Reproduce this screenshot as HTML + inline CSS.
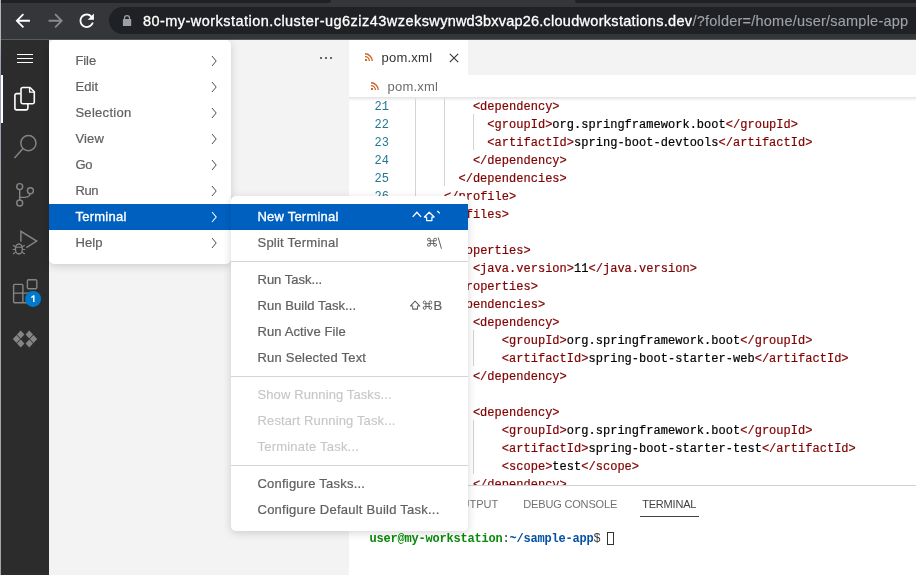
<!DOCTYPE html>
<html>
<head>
<meta charset="utf-8">
<title>pom.xml - sample-app</title>
<style>
*{box-sizing:border-box;margin:0;padding:0}
html,body{width:916px;height:575px;overflow:hidden;background:#fff}
body{position:relative;will-change:transform;font-family:"Liberation Sans",sans-serif;font-size:13px;color:#616161}
.abs{position:absolute}
/* ---------- chrome toolbar ---------- */
#chrome{left:0;top:0;width:916px;height:40px;background:#35363a}
#tabstrip-l{left:0;top:0;width:331px;height:2.6px;background:#202124;border-bottom-right-radius:6px}
#tabstrip-r{left:575px;top:0;width:341px;height:2.6px;background:#202124;border-bottom-left-radius:6px}
#chromeline{left:0;top:39px;width:916px;height:1px;background:#5a5b5e}
#pill{left:109px;top:7px;width:830px;height:27px;border-radius:14px;background:#202124}
#url{left:143px;top:12px;height:18px;line-height:18px;font-size:14.5px;white-space:pre;color:#fff;letter-spacing:.367px;-webkit-text-stroke:.3px #fff}
#url .dim{color:#9ea3a9;letter-spacing:.225px;-webkit-text-stroke:.12px #9ea3a9}
/* ---------- left strip ---------- */
#lstrip{left:0;top:0;width:1px;height:575px;background:linear-gradient(to bottom,#b3b3b3 0,#b3b3b3 40px,#99a0b2 60px,#99a0b2 130px,#a6a6a6 250px,#a6a6a6 100%)}
#lstrip2{left:0;top:0;width:1px;height:40px;background:#b3b3b3}
/* ---------- activity bar ---------- */
#act{left:1px;top:40px;width:48px;height:535px;background:#2c2c2c}
#ind{left:1px;top:75px;width:2px;height:48px;background:#fff}
/* ---------- sidebar ---------- */
#side{left:49px;top:40px;width:300px;height:535px;background:#f3f3f3}
/* ---------- editor ---------- */
#tabs{left:349px;top:40px;width:567px;height:35px;background:#f3f3f3}
#tab{left:349px;top:40px;width:119px;height:35px;background:#fff}
#crumbs{left:349px;top:75px;width:567px;height:22px;background:#fff}
#edshadow{left:349px;top:97px;width:567px;height:4px;background:linear-gradient(#e2e2e2,rgba(255,255,255,0))}
.code{-webkit-text-stroke:.2px;font-family:"Liberation Mono",monospace;font-size:12px;letter-spacing:.024px;white-space:pre;line-height:18px;height:18px;color:#000}
.code i{font-style:normal;color:#800000}
.ln{font-family:"Liberation Mono",monospace;font-size:12px;letter-spacing:.024px;line-height:18px;height:18px;color:#237893;left:349px;width:40px;text-align:right}
.g{width:1px;background:#d3d3d3}
/* ---------- panel ---------- */
#panelline{left:349px;top:485px;width:567px;height:1px;background:#d0d0d0}
#panel{left:349px;top:486px;width:567px;height:89px;background:#fff}
.ptab{top:497px;height:14px;line-height:14px;font-size:11px;color:#717171;white-space:pre}
/* ---------- menus ---------- */
.menu{background:#fff;border-radius:5px;box-shadow:0 2px 8px rgba(0,0,0,.16)}
.mi{position:absolute;left:0;right:0;height:26px;line-height:26px;white-space:pre}
.mi span{position:absolute;top:0;-webkit-text-stroke:.22px}
.mi.sel{background:#0060c0;color:#fff}
.mi.sel span{-webkit-text-stroke:.35px}
.sep{position:absolute;left:0;right:0;height:1px;background:#d4d4d4}
.dis{color:#c6c6c6}
.mi.dis span{-webkit-text-stroke:.1px}
.kb{right:26px;text-align:right}
</style>
</head>
<body>
<!-- browser toolbar -->
<div id="chrome" class="abs"></div>
<div id="tabstrip-l" class="abs"></div>
<div id="tabstrip-r" class="abs"></div>
<div id="pill" class="abs"></div>
<div id="chromeline" class="abs"></div>
<div id="url" class="abs"><span style="letter-spacing:.456px">80-my-workstation.</span><span style="letter-spacing:.467px">cluster-ug6ziz43wzeksw</span><span style="letter-spacing:.175px">ynwd3bxvap26.</span><span style="letter-spacing:.305px">cloudworkstations.dev</span><span class="dim">/?folder=/home/user/sample-app</span></div>

<!-- activity bar -->
<div id="act" class="abs"></div>
<div id="ind" class="abs"></div>


<!-- toolbar icons -->
<svg class="abs" style="left:12.25px;top:10.25px" width="21.5" height="21.5" viewBox="0 0 24 24"><path fill="#fff" d="M20 11H7.83l5.59-5.59L12 4l-8 8 8 8 1.41-1.41L7.83 13H20v-2z"/></svg>
<svg class="abs" style="left:44.7px;top:10.25px" width="21.5" height="21.5" viewBox="0 0 24 24"><path fill="#8a8b8e" d="M4 11h12.17l-5.59-5.59L12 4l8 8-8 8-1.41-1.41L16.17 13H4v-2z"/></svg>
<svg class="abs" style="left:76.3px;top:10.1px" width="21.5" height="21.5" viewBox="0 0 24 24"><path fill="#fff" d="M17.65 6.35C16.2 4.9 14.21 4 12 4c-4.42 0-7.99 3.58-7.99 8s3.57 8 7.99 8c3.73 0 6.84-2.55 7.73-6h-2.08c-.82 2.33-3.04 4-5.65 4-3.31 0-6-2.69-6-6s2.69-6 6-6c1.66 0 3.14.69 4.22 1.78L13 11h7V4l-2.35 2.35z"/></svg>
<svg class="abs" style="left:122px;top:14px" width="10" height="13" viewBox="0 0 10 13"><rect x=".9" y="5.100" width="8.300" height="7" rx=".7" fill="#9aa0a6"/><path fill="none" stroke="#9aa0a6" stroke-width="1.250" d="M2.500 5.600V4a2.500 2.500 0 0 1 5 0v1.600"/></svg>

<!-- activity bar icons -->
<svg class="abs" style="left:0;top:40px" width="50" height="535" viewBox="0 40 50 535" fill="none" stroke-linecap="butt">
  <!-- hamburger -->
  <path stroke="#fff" stroke-width="1" d="M17 54.500h16M17 58.500h16M17 62.500h16"/>
  <!-- files -->
  <g stroke="#fff" stroke-width="1.6" stroke-linejoin="round">
    <path d="M22.800 87.500h7.200l4.300 4.300v10.200a1.800 1.800 0 0 1-1.800 1.800h-9.700a1.800 1.800 0 0 1-1.800-1.800v-12.700a1.800 1.800 0 0 1 1.800-1.800z"/>
    <path d="M29.600 87.700v4.500h4.500" stroke-width="1.300"/>
    <path d="M20.500 93.600h-3.800a1.800 1.800 0 0 0-1.800 1.800v12.700a1.800 1.800 0 0 0 1.800 1.800h9.400a1.800 1.800 0 0 0 1.800-1.800v-4"/>
  </g>
  <!-- search -->
  <g stroke="#858585" stroke-width="1.500">
    <circle cx="28.400" cy="143.100" r="7.600"/>
    <path d="M23 148.600l-8.500 9.300"/>
  </g>
  <!-- scm -->
  <g stroke="#858585" stroke-width="1.400">
    <circle cx="19.700" cy="186.600" r="3"/>
    <circle cx="19.700" cy="203" r="3"/>
    <circle cx="30.400" cy="190.800" r="3"/>
    <path d="M19.700 189.600v10.400M30.200 193.800c-.3 3.200-3.500 3.600-10.500 3.600"/>
  </g>
  <!-- debug -->
  <g stroke="#858585" stroke-width="1.400" stroke-linejoin="miter">
    <path d="M20.900 241.700v-10.400l15.800 9.800-10.400 6.600"/>
    <ellipse cx="18.900" cy="249" rx="3.500" ry="5"/>
    <path d="M15.700 247.200h6.400" stroke-width="1.100"/>
    <path d="M13 245.200l2.600 1.500M12.700 249.500h2.800M13 254l2.600-1.800M24.800 245.200l-2.600 1.500M25.100 249.500h-2.800M24.800 254l-2.600-1.800" stroke-width="1.200"/>
  </g>
  <!-- extensions -->
  <g stroke="#858585" stroke-width="1.400" stroke-linejoin="round">
    <rect x="27.400" y="279.800" width="9.400" height="8.900" rx="1.200"/>
    <path d="M14.600 284.400h7.300a1 1 0 0 1 1 1v7.700h7.600v8.600a1 1 0 0 1-1 1h-14.900a1 1 0 0 1-1-1v-16.300a1 1 0 0 1 1-1zM13.600 293.100h9.300v9.600"/>
  </g>
  <circle cx="33.100" cy="298.900" r="8" fill="#007acc" stroke="none"/>
  <path fill="#fff" stroke="none" d="M31 297.100l2.300-1.900h1.200v6.800h-1.400v-5l-1.500 1.200z"/>
  <!-- cloud code -->
  <g fill="#858585" stroke="none">
    <path d="M20.700 330.600l3.700 3.900-3.700 3.900-3.700-3.900zM16.500 335.100l3.700 3.900-3.700 3.900-3.700-3.900zM20.700 339.600l3.700 3.900-3.700 3.900-3.700-3.900z"/>
    <path d="M29.300 330.600l3.700 3.900-3.700 3.900-3.700-3.900zM33.500 335.100l3.700 3.900-3.700 3.900-3.700-3.900zM29.300 339.600l3.700 3.900-3.700 3.900-3.700-3.900z"/>
  </g>
</svg>

<!-- sidebar -->
<div id="side" class="abs"></div>

<!-- editor -->
<div id="tabs" class="abs"></div>
<div id="tab" class="abs"></div>
<div id="crumbs" class="abs"></div>

<!-- panel -->
<div id="panelline" class="abs"></div>
<div id="panel" class="abs"></div>

<!-- editor content -->
<div id="ed" class="abs" style="left:349px;top:97px;width:567px;height:388px;overflow:hidden;background:#fff">
<div class="abs ln" style="left:0px;top:1px">21</div>
<div class="abs code" style="left:123.89px;top:1px"><i>&lt;dependency&gt;</i></div>
<div class="abs ln" style="left:0px;top:19px">22</div>
<div class="abs code" style="left:138.34px;top:19px"><i>&lt;groupId&gt;</i>org.springframework.boot<i>&lt;/groupId&gt;</i></div>
<div class="abs ln" style="left:0px;top:37px">23</div>
<div class="abs code" style="left:138.34px;top:37px"><i>&lt;artifactId&gt;</i>spring-boot-devtools<i>&lt;/artifactId&gt;</i></div>
<div class="abs ln" style="left:0px;top:55px">24</div>
<div class="abs code" style="left:123.89px;top:55px"><i>&lt;/dependency&gt;</i></div>
<div class="abs ln" style="left:0px;top:73px">25</div>
<div class="abs code" style="left:109.44px;top:73px"><i>&lt;/dependencies&gt;</i></div>
<div class="abs ln" style="left:0px;top:91px">26</div>
<div class="abs code" style="left:95px;top:91px"><i>&lt;/profile&gt;</i></div>
<div class="abs ln" style="left:0px;top:109px">27</div>
<div class="abs code" style="left:80.55px;top:109px"><i>&lt;/profiles&gt;</i></div>
<div class="abs ln" style="left:0px;top:127px">28</div>
<div class="abs ln" style="left:0px;top:145px">29</div>
<div class="abs code" style="left:95px;top:145px"><i>&lt;properties&gt;</i></div>
<div class="abs ln" style="left:0px;top:163px">30</div>
<div class="abs code" style="left:123.89px;top:163px"><i>&lt;java.version&gt;</i>11<i>&lt;/java.version&gt;</i></div>
<div class="abs ln" style="left:0px;top:181px">31</div>
<div class="abs code" style="left:95px;top:181px"><i>&lt;/properties&gt;</i></div>
<div class="abs ln" style="left:0px;top:199px">32</div>
<div class="abs code" style="left:95px;top:199px"><i>&lt;dependencies&gt;</i></div>
<div class="abs ln" style="left:0px;top:217px">33</div>
<div class="abs code" style="left:123.89px;top:217px"><i>&lt;dependency&gt;</i></div>
<div class="abs ln" style="left:0px;top:235px">34</div>
<div class="abs code" style="left:152.79px;top:235px"><i>&lt;groupId&gt;</i>org.springframework.boot<i>&lt;/groupId&gt;</i></div>
<div class="abs ln" style="left:0px;top:253px">35</div>
<div class="abs code" style="left:152.79px;top:253px"><i>&lt;artifactId&gt;</i>spring-boot-starter-web<i>&lt;/artifactId&gt;</i></div>
<div class="abs ln" style="left:0px;top:271px">36</div>
<div class="abs code" style="left:123.89px;top:271px"><i>&lt;/dependency&gt;</i></div>
<div class="abs ln" style="left:0px;top:289px">37</div>
<div class="abs ln" style="left:0px;top:307px">38</div>
<div class="abs code" style="left:123.89px;top:307px"><i>&lt;dependency&gt;</i></div>
<div class="abs ln" style="left:0px;top:325px">39</div>
<div class="abs code" style="left:152.79px;top:325px"><i>&lt;groupId&gt;</i>org.springframework.boot<i>&lt;/groupId&gt;</i></div>
<div class="abs ln" style="left:0px;top:343px">40</div>
<div class="abs code" style="left:152.79px;top:343px"><i>&lt;artifactId&gt;</i>spring-boot-starter-test<i>&lt;/artifactId&gt;</i></div>
<div class="abs ln" style="left:0px;top:361px">41</div>
<div class="abs code" style="left:152.79px;top:361px"><i>&lt;scope&gt;</i>test<i>&lt;/scope&gt;</i></div>
<div class="abs ln" style="left:0px;top:379px">42</div>
<div class="abs code" style="left:123.89px;top:379px"><i>&lt;/dependency&gt;</i></div>
<div class="abs g" style="left:66.1px;top:-1px;height:396px"></div>
<div class="abs g" style="left:95px;top:-1px;height:90px"></div>
<div class="abs g" style="left:123.9px;top:17px;height:36px"></div>
<div class="abs g" style="left:95px;top:161px;height:18px"></div>
<div class="abs g" style="left:95px;top:215px;height:180px"></div>
<div class="abs g" style="left:123.9px;top:233px;height:36px"></div>
<div class="abs g" style="left:123.9px;top:323px;height:54px"></div>
</div>
<div id="edshadow" class="abs"></div>
<svg class="abs" style="left:364.85px;top:53px" width="8" height="8" viewBox="0 0 8 8"><rect x="0" y="6" width="2" height="2" fill="#cc6628"/><path fill="none" stroke="#cc6628" stroke-width="1.400" d="M0 3.600a4.400 4.400 0 0 1 4.400 4.400M0 .8a7.200 7.200 0 0 1 7.200 7.200"/></svg>
<div class="abs" style="left:381.6px;top:49px;line-height:18px;color:#333;letter-spacing:.22px;white-space:pre">pom.xml</div>
<svg class="abs" style="left:449px;top:53px" width="10" height="10" viewBox="0 0 10 10"><path stroke="#333" stroke-width="1.100" fill="none" d="M.8 .8l8.400 8.400M9.200 .8L.8 9.200"/></svg>
<svg class="abs" style="left:370.8px;top:82px" width="8" height="8" viewBox="0 0 8 8"><rect x="0" y="6" width="2" height="2" fill="#cc6628"/><path fill="none" stroke="#cc6628" stroke-width="1.400" d="M0 3.600a4.400 4.400 0 0 1 4.400 4.400M0 .8a7.200 7.200 0 0 1 7.200 7.200"/></svg>
<div class="abs" style="left:387.5px;top:78px;line-height:18px;color:#6c6c6c;letter-spacing:.22px;white-space:pre">pom.xml</div>
<div class="abs" style="left:320px;top:57px;width:14px;height:3px"><i class="abs" style="left:0;top:0;width:2px;height:2px;background:#666"></i><i class="abs" style="left:5px;top:0;width:2px;height:2px;background:#666"></i><i class="abs" style="left:10px;top:0;width:2px;height:2px;background:#666"></i></div>
<div class="abs ptab" style="left:453px">OUTPUT</div>
<div class="abs ptab" style="left:523.3px;letter-spacing:-.17px">DEBUG CONSOLE</div>
<div class="abs ptab" style="left:642.2px;letter-spacing:-.2px;color:#424242">TERMINAL</div>
<div class="abs" style="left:640px;top:516px;width:59px;height:1px;background:#424242"></div>
<div class="abs" style="left:369.5px;top:530px;height:18px;line-height:18px;font-family:'Liberation Mono',monospace;font-size:12px;letter-spacing:-.2px;white-space:pre;color:#333"><b style="color:#0a8a0a">user@my-workstation</b>:<b style="color:#0451a5">~/sample-app</b>$ </div>
<div class="abs" style="left:607px;top:531.5px;width:7px;height:13px;border:1px solid #333"></div>

<!-- main menu -->
<div class="abs menu" style="left:49px;top:40px;width:182px;height:224px">
<div class="mi" style="top:8px"><span style="left:26.400px;letter-spacing:-0.062px">File</span><svg class="abs" style="left:161.7px;top:6.500px" width="7" height="12" viewBox="0 0 7 12"><path fill="none" stroke="#4d4d4d" stroke-width="1" d="M1 1l4.200 5L1 11"/></svg></div>
<div class="mi" style="top:34px"><span style="left:26.400px;letter-spacing:0.072px">Edit</span><svg class="abs" style="left:161.7px;top:6.500px" width="7" height="12" viewBox="0 0 7 12"><path fill="none" stroke="#4d4d4d" stroke-width="1" d="M1 1l4.200 5L1 11"/></svg></div>
<div class="mi" style="top:60px"><span style="left:26.400px;letter-spacing:0.302px">Selection</span><svg class="abs" style="left:161.7px;top:6.500px" width="7" height="12" viewBox="0 0 7 12"><path fill="none" stroke="#4d4d4d" stroke-width="1" d="M1 1l4.200 5L1 11"/></svg></div>
<div class="mi" style="top:86px"><span style="left:26.400px;letter-spacing:0.163px">View</span><svg class="abs" style="left:161.7px;top:6.500px" width="7" height="12" viewBox="0 0 7 12"><path fill="none" stroke="#4d4d4d" stroke-width="1" d="M1 1l4.200 5L1 11"/></svg></div>
<div class="mi" style="top:112px"><span style="left:26.400px;letter-spacing:-0.37px">Go</span><svg class="abs" style="left:161.7px;top:6.500px" width="7" height="12" viewBox="0 0 7 12"><path fill="none" stroke="#4d4d4d" stroke-width="1" d="M1 1l4.200 5L1 11"/></svg></div>
<div class="mi" style="top:138px"><span style="left:26.400px;letter-spacing:-0.32px">Run</span><svg class="abs" style="left:161.7px;top:6.500px" width="7" height="12" viewBox="0 0 7 12"><path fill="none" stroke="#4d4d4d" stroke-width="1" d="M1 1l4.200 5L1 11"/></svg></div>
<div class="mi sel" style="top:164px"><span style="left:26.400px;letter-spacing:0.272px">Terminal</span><svg class="abs" style="left:161.7px;top:6.500px" width="7" height="12" viewBox="0 0 7 12"><path fill="none" stroke="#fff" stroke-width="1.050" d="M1 1l4.200 5L1 11"/></svg></div>
<div class="mi" style="top:190px"><span style="left:26.400px;letter-spacing:0.138px">Help</span><svg class="abs" style="left:161.7px;top:6.500px" width="7" height="12" viewBox="0 0 7 12"><path fill="none" stroke="#4d4d4d" stroke-width="1" d="M1 1l4.200 5L1 11"/></svg></div>
</div>
<!-- sub menu -->
<div class="abs menu" style="left:231px;top:196px;width:236.500px;height:334.500px">
<div class="mi sel" style="top:8px"><span style="left:26.500px;letter-spacing:0.207px">New Terminal</span></div>
<div class="mi" style="top:34px"><span style="left:26.500px;letter-spacing:0.236px">Split Terminal</span></div>
<div class="sep" style="top:65px"></div>
<div class="mi" style="top:71px"><span style="left:26.500px;letter-spacing:-0.009px">Run Task...</span></div>
<div class="mi" style="top:97px"><span style="left:26.500px;letter-spacing:0.082px">Run Build Task...</span></div>
<div class="mi" style="top:123px"><span style="left:26.500px;letter-spacing:0.107px">Run Active File</span></div>
<div class="mi" style="top:149px"><span style="left:26.500px;letter-spacing:0.201px">Run Selected Text</span></div>
<div class="sep" style="top:180px"></div>
<div class="mi dis" style="top:186px"><span style="left:26.500px;letter-spacing:0.105px">Show Running Tasks...</span></div>
<div class="mi dis" style="top:212px"><span style="left:26.500px;letter-spacing:0.131px">Restart Running Task...</span></div>
<div class="mi dis" style="top:238px"><span style="left:26.500px;letter-spacing:0.21px">Terminate Task...</span></div>
<div class="sep" style="top:269px"></div>
<div class="mi" style="top:275px"><span style="left:26.500px;letter-spacing:0.211px">Configure Tasks...</span></div>
<div class="mi" style="top:301px"><span style="left:26.500px;letter-spacing:0.237px">Configure Default Build Task...</span></div>
</div>
<!-- keybinding glyphs -->
<svg class="abs" style="left:400px;top:200px" width="60" height="120" viewBox="400 200 60 120">
<path d="M412.7 216.900L416.850 212.300L421 216.900" stroke="#fff" stroke-width="1.350" fill="none"/>
<path d="M429.25 212.20 L424.40 217.00 L426.60 217.00 L426.60 220.50 L431.90 220.50 L431.90 217.00 L434.10 217.00Z" stroke="#fff" stroke-width="1.25" fill="none" stroke-linejoin="round"/>
<path d="M437.300 211L439.800 213.400" stroke="#fff" stroke-width="1.300" fill="none"/>
<path transform="translate(427.01 238.20) scale(0.979 0.889)" d="M3.4 1.5A1.5 1.5 0 1 0 1.9 3H8.3A1.5 1.5 0 1 0 6.8 1.5V7.5A1.5 1.5 0 1 0 8.3 6H1.9A1.5 1.5 0 1 0 3.4 7.5Z" stroke="#616161" stroke-width="1.0" fill="none" vector-effect="non-scaling-stroke"/>
<path d="M438.200 237.500L441.500 248.800" stroke="#616161" stroke-width="1" fill="none"/>
<path d="M415.10 301.10 L410.50 305.90 L412.70 305.90 L412.70 309.10 L417.50 309.10 L417.50 305.90 L419.70 305.90Z" stroke="#616161" stroke-width="1.05" fill="none" stroke-linejoin="round"/>
<path transform="translate(422.83 301.00) scale(0.915 0.922)" d="M3.4 1.5A1.5 1.5 0 1 0 1.9 3H8.3A1.5 1.5 0 1 0 6.8 1.5V7.5A1.5 1.5 0 1 0 8.3 6H1.9A1.5 1.5 0 1 0 3.4 7.5Z" stroke="#616161" stroke-width="1.0" fill="none" vector-effect="non-scaling-stroke"/>
</svg>
<div class="abs" style="left:433.400px;top:296.700px;line-height:18px;font-size:13px;color:#616161;-webkit-text-stroke:.2px">B</div>
<div id="lstrip" class="abs"></div>
<div id="lstrip2" class="abs"></div>
</body>
</html>
